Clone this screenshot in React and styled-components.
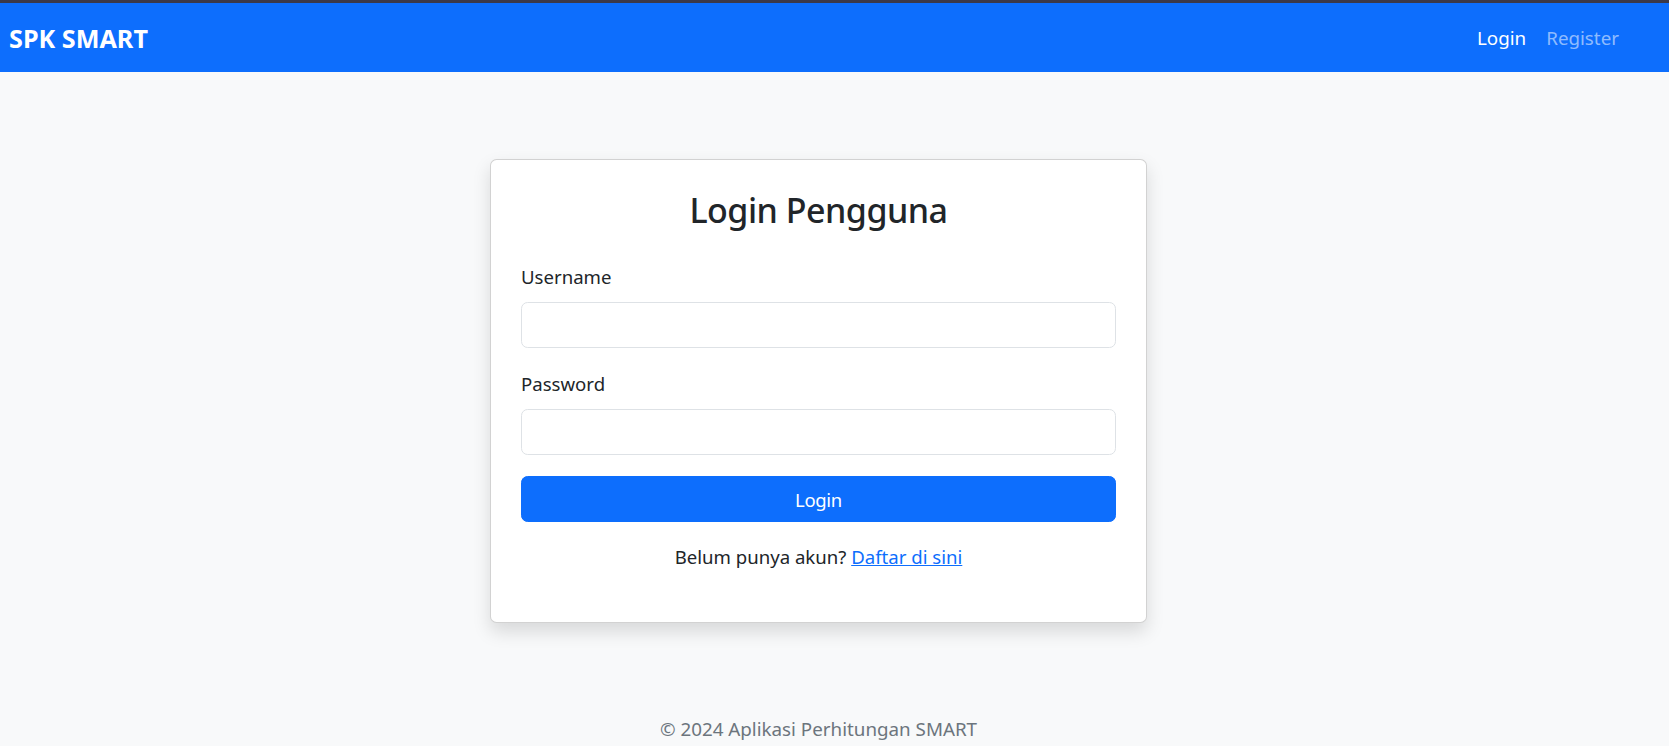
import React, { useState } from "react";
import styled, { createGlobalStyle } from "styled-components";

const GlobalStyle = createGlobalStyle`
  * {
    box-sizing: border-box;
  }
  body {
    margin: 0;
    background-color: #f8f9fa;
    font-family: "Noto Sans", "Open Sans", sans-serif;
    color: #212529;
    font-size: 18.6px;
    line-height: 26.4px;
  }
`;

const Page = styled.div`
  min-height: 100vh;
  border-top: 3px solid #3b3949;
`;

const Navbar = styled.nav`
  display: flex;
  align-items: center;
  justify-content: space-between;
  height: 69px;
  padding: 0 42px 0 9px;
  background-color: #0d6efd;
`;

const Brand = styled.a`
  font-size: 25.2px;
  font-weight: 700;
  color: #fff;
  text-decoration: none;
  margin-top: 2px;
`;

const NavLinks = styled.div`
  display: flex;
  align-items: center;
  gap: 4px;
  margin-top: 2px;
`;

const NavLink = styled.a`
  padding: 0 8px;
  font-size: 18.8px;
  color: ${({ $active }) => ($active ? "#fff" : "rgba(255, 255, 255, 0.55)")};
  text-decoration: none;
`;

const Main = styled.main`
  display: flex;
  flex-direction: column;
  align-items: center;
  padding: 87px 32px 0 0;
`;

const Card = styled.div`
  width: 657px;
  padding: 30px 30px 51px;
  background-color: #fff;
  border: 1px solid rgba(0, 0, 0, 0.175);
  border-radius: 6.6px;
  box-shadow: 0 8.8px 17.6px rgba(0, 0, 0, 0.13);
`;

const Title = styled.h2`
  margin: 0 0 33px;
  font-size: 34px;
  font-weight: 500;
  line-height: 1.2;
  text-align: center;
  letter-spacing: -0.5px;
`;

const Field = styled.div`
  margin-bottom: ${({ $last }) => ($last ? "21px" : "23.3px")};
`;

const Label = styled.label`
  display: block;
  margin-bottom: 11.5px;
`;

const Input = styled.input`
  display: block;
  width: 100%;
  height: 46px;
  padding: 8px 14px;
  font-family: inherit;
  font-size: 18.6px;
  color: #212529;
  background-color: #fff;
  border: 1px solid #dee2e6;
  border-radius: 6.6px;
  outline: none;
`;

const Button = styled.button`
  display: block;
  width: 100%;
  height: 46.5px;
  font-family: inherit;
  font-size: 18.5px;
  color: #fff;
  background-color: #0d6efd;
  border: 1px solid #0d6efd;
  border-radius: 6.6px;
  cursor: pointer;
  letter-spacing: -0.3px;
`;

const Hint = styled.p`
  margin: 22px 0 0;
  text-align: center;
`;

const Link = styled.a`
  color: #0d6efd;
  text-decoration: underline;
`;

const Footer = styled.footer`
  padding: 93px 32px 16px 0;
  font-size: 18.8px;
  text-align: center;
  color: #6c757d;
`;

const App = () => {
  const [username, setUsername] = useState("");
  const [password, setPassword] = useState("");

  const handleSubmit = (e) => {
    e.preventDefault();
  };

  return (
    <>
      <GlobalStyle />
      <Page>
        <Navbar>
          <Brand href="#">SPK SMART</Brand>
          <NavLinks>
            <NavLink href="#" $active>
              Login
            </NavLink>
            <NavLink href="#">Register</NavLink>
          </NavLinks>
        </Navbar>
        <Main>
          <Card>
            <Title>Login Pengguna</Title>
            <form onSubmit={handleSubmit}>
              <Field>
                <Label htmlFor="username">Username</Label>
                <Input
                  id="username"
                  type="text"
                  value={username}
                  onChange={(e) => setUsername(e.target.value)}
                />
              </Field>
              <Field $last>
                <Label htmlFor="password">Password</Label>
                <Input
                  id="password"
                  type="password"
                  value={password}
                  onChange={(e) => setPassword(e.target.value)}
                />
              </Field>
              <Button type="submit">Login</Button>
            </form>
            <Hint>
              Belum punya akun? <Link href="#">Daftar di sini</Link>
            </Hint>
          </Card>
        </Main>
        <Footer>&copy; 2024 Aplikasi Perhitungan SMART</Footer>
      </Page>
    </>
  );
};

export default App;
